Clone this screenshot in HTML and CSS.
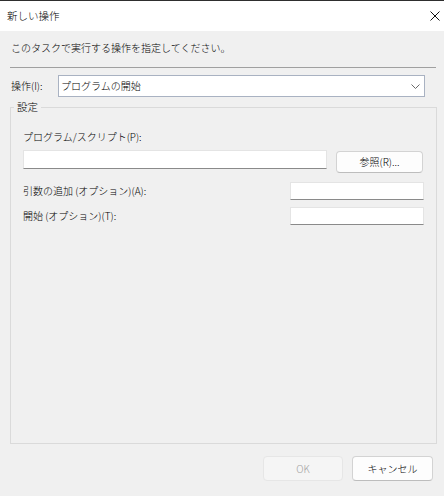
FILE: index.html
```html
<!DOCTYPE html>
<html lang="ja">
<head>
<meta charset="utf-8">
<link rel="stylesheet" href="styles.css">
</head>
<body>
<div class="window">
  <div class="titlebar">
    <span class="title">新しい操作</span>
    <svg class="close" width="10" height="10" viewBox="0 0 10 10"><path d="M0.5 0.5 L9.5 9.5 M9.5 0.5 L0.5 9.5" stroke="#111" stroke-width="1" fill="none"/></svg>
  </div>
  <div class="content">
    <div class="instruction">このタスクで実行する操作を指定してください。</div>
    <div class="separator"></div>
    <div class="action-row">
      <span class="action-label">操作(I):</span>
      <div class="combo">
        <span>プログラムの開始</span>
        <svg class="chev" width="9" height="5" viewBox="0 0 9 5"><path d="M0.5 0.5 L4.5 4.5 L8.5 0.5" stroke="#6a6a6a" stroke-width="1" fill="none"/></svg>
      </div>
    </div>
    <fieldset class="group">
      <legend>設定</legend>
      <div class="label">プログラム/スクリプト(P):</div>
      <div class="prog-row">
        <div class="input wide"></div>
        <div class="btn browse">参照(R)...</div>
      </div>
      <div class="opt-row first">
        <span class="label">引数の追加 (オプション)(A):</span>
        <div class="input small"></div>
      </div>
      <div class="opt-row second">
        <span class="label">開始 (オプション)(T):</span>
        <div class="input small"></div>
      </div>
    </fieldset>
    <div class="footer">
      <div class="btn ok disabled">OK</div>
      <div class="btn cancel">キャンセル</div>
    </div>
  </div>
</div>
</body>
</html>
```
FILE: styles.css
```css
* { box-sizing: border-box; }
html, body { margin: 0; padding: 0; }
body {
  width: 444px;
  height: 496px;
  overflow: hidden;
  font-family: "Noto Sans CJK JP", "Noto Sans", sans-serif;
  font-size: 10px;
  font-weight: 300;
  line-height: 14px;
  color: #000;
  background: #f0f0f0;
}
.window {
  display: flex;
  flex-direction: column;
  height: 496px;
  border-top: 1px solid #2e2e2e;
}
.titlebar {
  height: 30px;
  background: #fff;
  display: flex;
  align-items: center;
  justify-content: space-between;
  padding: 0 4px 1px 7px;
  flex: none;
}
.title { font-size: 10.5px; }
.content {
  flex: 1;
  display: flex;
  flex-direction: column;
  padding: 10px 7px 15px 10px;
}
.instruction { padding-left: 1px; }
.separator {
  height: 1px;
  background: #a0a0a0;
  margin: 12px 1px 0 0;
}
.action-row {
  display: flex;
  align-items: center;
  margin-top: 7px;
  padding-right: 12px;
}
.action-label { width: 48px; padding-left: 1px; flex: none; }
.combo {
  flex: 1;
  height: 22px;
  background: #fff;
  border: 1px solid #a9b2c2;
  display: flex;
  align-items: center;
  justify-content: space-between;
  padding: 0 4px 0 2px;
}
.chev { margin-top: 1px; }
.group {
  flex: 1;
  margin: 3px 0 0 0;
  border: 1px solid #dadada;
  padding: 16px 13px 0 12px;
  min-width: 0;
}
.group legend {
  padding: 0 3px;
  margin-left: -9px;
  line-height: 14px;
  font-size: 10.5px;
}
.input {
  background: #fff;
  border: 1px solid #e4e4e4;
  border-bottom-color: #8a8a8a;
}
.prog-row {
  display: flex;
  align-items: flex-start;
  gap: 9px;
  margin-top: 6px;
}
.input.wide { flex: 1; height: 19px; }
.btn {
  display: flex;
  align-items: center;
  justify-content: center;
  background: #fdfdfd;
  border: 1px solid #d3d3d3;
  border-bottom-color: #bdbdbd;
  border-radius: 4px;
}
.browse { width: 87px; height: 22px; margin-top: 1px; }
.opt-row {
  display: flex;
  align-items: center;
  justify-content: space-between;
  margin-right: -1px;
}
.opt-row.first { margin-top: 9px; }
.opt-row.second { margin-top: 7px; }
.input.small { width: 134px; height: 18px; }
.footer {
  display: flex;
  justify-content: flex-end;
  gap: 9px;
  margin-top: 12px;
  padding-right: 4px;
}
.footer .btn { height: 25px; width: 81px; }
.footer .ok { width: 80px; }
.btn.disabled {
  background: #f5f5f5;
  border-color: #e6e6e6;
  color: #a2a2a2;
}
```
